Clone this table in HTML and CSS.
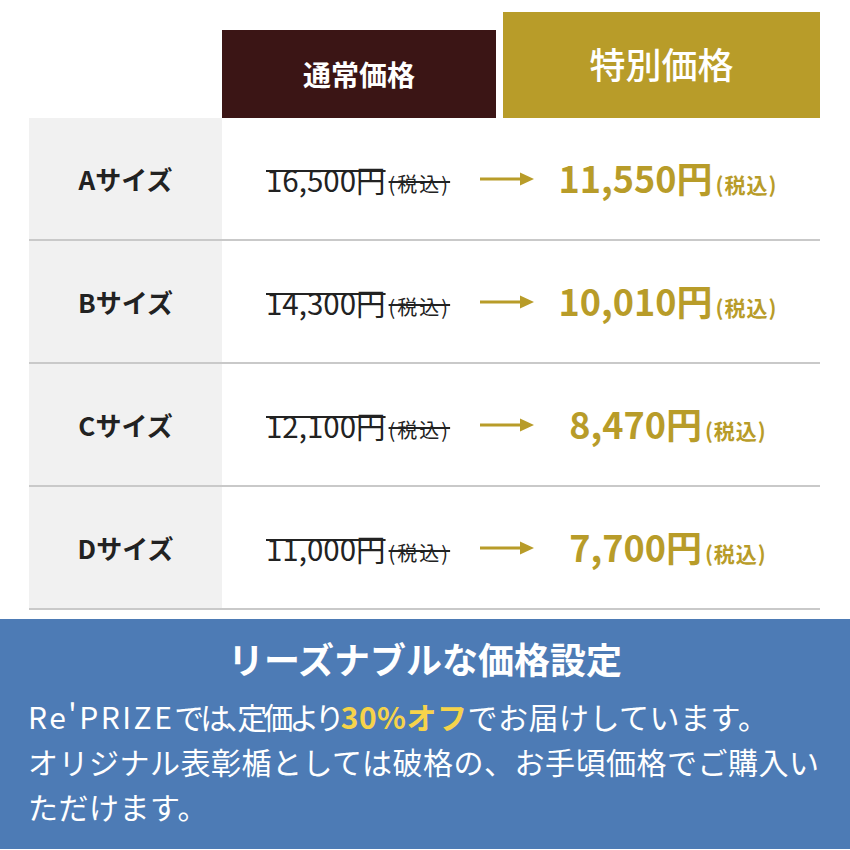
FILE: index.html
```html
<!DOCTYPE html>
<html lang="ja">
<head>
<meta charset="utf-8">
<link rel="stylesheet" href="styles.css">
</head>
<body>
<div class="page">
  <div class="head">
    <div class="h-normal">通常価格</div>
    <div class="h-special">特別価格</div>
  </div>
  <div class="table">
    <div class="row">
      <div class="label">Aサイズ</div>
      <div class="old"><span class="old-num">16,500円</span><span class="old-tax">(税込)</span></div>
      <div class="arrow"><svg width="54" height="14" viewBox="0 0 54 14"><line x1="0" y1="7" x2="42" y2="7" stroke="#b89c29" stroke-width="3"/><polygon points="40,0.5 54,7 40,13.5" fill="#b89c29"/></svg></div>
      <div class="new"><span class="new-num">11,550円</span><span class="new-tax">(税込)</span></div>
    </div>
    <div class="row">
      <div class="label">Bサイズ</div>
      <div class="old"><span class="old-num">14,300円</span><span class="old-tax">(税込)</span></div>
      <div class="arrow"><svg width="54" height="14" viewBox="0 0 54 14"><line x1="0" y1="7" x2="42" y2="7" stroke="#b89c29" stroke-width="3"/><polygon points="40,0.5 54,7 40,13.5" fill="#b89c29"/></svg></div>
      <div class="new"><span class="new-num">10,010円</span><span class="new-tax">(税込)</span></div>
    </div>
    <div class="row">
      <div class="label">Cサイズ</div>
      <div class="old"><span class="old-num">12,100円</span><span class="old-tax">(税込)</span></div>
      <div class="arrow"><svg width="54" height="14" viewBox="0 0 54 14"><line x1="0" y1="7" x2="42" y2="7" stroke="#b89c29" stroke-width="3"/><polygon points="40,0.5 54,7 40,13.5" fill="#b89c29"/></svg></div>
      <div class="new"><span class="new-num">8,470円</span><span class="new-tax">(税込)</span></div>
    </div>
    <div class="row">
      <div class="label">Dサイズ</div>
      <div class="old"><span class="old-num">11,000円</span><span class="old-tax">(税込)</span></div>
      <div class="arrow"><svg width="54" height="14" viewBox="0 0 54 14"><line x1="0" y1="7" x2="42" y2="7" stroke="#b89c29" stroke-width="3"/><polygon points="40,0.5 54,7 40,13.5" fill="#b89c29"/></svg></div>
      <div class="new"><span class="new-num">7,700円</span><span class="new-tax">(税込)</span></div>
    </div>
  </div>
  <div class="note">
    <h2 class="note-title">リーズナブルな価格設定</h2>
    <p class="note-text"><span class="latin">Re'PRIZE</span><span class="tight">では､定価より</span><span class="hl">30%オフ</span>でお届けしています。<br>オリジナル表彰楯としては破格の、お手頃価格でご購入いただけます。</p>
  </div>
</div>
</body>
</html>
```

FILE: styles.css
```css
html, body {
  margin: 0;
  padding: 0;
  background: #ffffff;
}
body {
  font-family: "Noto Sans CJK JP", "Noto Sans", sans-serif;
  color: #222222;
  width: 850px;
  height: 850px;
  overflow: hidden;
}
.page {
  width: 850px;
}
.head {
  display: flex;
  align-items: flex-end;
  height: 118px;
  padding-left: 222px;
  gap: 7px;
}
.h-normal {
  width: 274px;
  height: 88px;
  background: #3b1515;
  color: #fff;
  font-size: 28px;
  font-weight: 700;
  display: flex;
  align-items: center;
  justify-content: center;
}
.h-special {
  width: 317px;
  height: 106px;
  padding-bottom: 4px;
  box-sizing: border-box;
  background: #b89c29;
  color: #fff;
  font-size: 36px;
  font-weight: 500;
  display: flex;
  align-items: center;
  justify-content: center;
}
.table {
  margin: 0 30px 0 29px;
}
.row {
  display: flex;
  align-items: center;
  height: 121px;
  border-bottom: 2px solid #c9c9c9;
}
.label {
  width: 193px;
  align-self: stretch;
  background: #f1f1f1;
  display: flex;
  align-items: center;
  justify-content: center;
  font-size: 26px;
  font-weight: 700;
  color: #222;
}
.old {
  width: 188px;
  margin-left: 44px;
  text-decoration: line-through;
  text-decoration-thickness: 2px;
  color: #222;
  white-space: nowrap;
}
.old-num {
  font-size: 29.5px;
}
.old-tax {
  font-size: 20px;
  letter-spacing: 2px;
  padding-left: 3px;
}
.arrow {
  margin-left: 26px;
  display: flex;
  align-items: center;
}
.new {
  flex: 1;
  display: flex;
  align-items: baseline;
  justify-content: center;
  padding-right: 18px;
  padding-bottom: 4px;
  color: #b89c29;
  font-weight: 700;
  white-space: nowrap;
}
.new-num {
  font-size: 36px;
}
.new-tax {
  font-size: 21px;
  letter-spacing: 1px;
  margin-left: 3px;
}
.note {
  margin-top: 9px;
  height: 230px;
  background: #4d7bb5;
  color: #fff;
  padding: 13px 28px 0;
  box-sizing: border-box;
}
.note-title {
  margin: 0;
  text-align: center;
  font-size: 36px;
  font-weight: 700;
  line-height: 52px;
}
.note-text {
  margin: 10px 0 0;
  font-size: 30px;
  line-height: 45px;
  letter-spacing: 0.5px;
}
.latin {
  letter-spacing: 2.5px;
}
.tight {
  letter-spacing: -4px;
}
.hl {
  color: #f6d34a;
  font-weight: 700;
}
```
